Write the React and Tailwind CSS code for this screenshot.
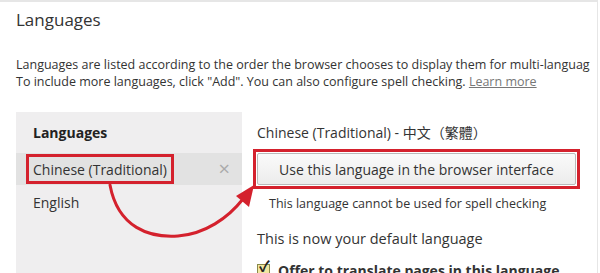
import React from 'react';

const font = { fontFamily: '"Open Sans", "Noto Sans CJK TC", sans-serif' };

function Arrow() {
  return (
    <svg className="absolute left-0 top-0 pointer-events-none" width="600" height="273" viewBox="0 0 600 273">
      <path d="M110 185 C 118 228, 150 238, 178 236 C 205 234, 228 218, 243 199" fill="none" stroke="#d4212d" strokeWidth="3" strokeLinecap="round" />
      <polygon points="254,185 236,196 249,207" fill="#d4212d" />
    </svg>
  );
}

export default function App() {
  return (
    <div className="relative w-[600px] h-[273px] overflow-hidden bg-white" style={font}>
      <div className="w-[598px] h-full border-t-2 border-r border-[#e6e6e6] flex flex-col">
        {/* Title */}
        <h1 className="pl-4 pt-[6px] text-[17px] leading-[24px] text-[#333]">Languages</h1>
        <p className="pl-4 mt-[24px] text-[12.5px] leading-[17px] text-[#333] whitespace-nowrap">
          Languages are listed according to the order the browser chooses to display them for multi-languag
          <br />
          To include more languages, click "Add". You can also configure spell checking.{' '}
          <span className="text-[#777] underline">Learn more</span>
        </p>

        <div className="flex mt-[22px] flex-1">
          {/* Left list */}
          <div className="ml-4 w-[226px] bg-[#efeeef] flex flex-col">
            <div className="pl-[17px] pt-[10px] h-[41px] text-[14px] leading-[22px] font-bold text-[#222]">Languages</div>
            <div className="h-[32px] bg-[#e2e2e2] flex items-center pl-[10px] pr-[12px] justify-between">
              <span className="border-[3px] border-[#d4212d] h-[30px] px-[4px] flex items-center text-[14px] text-[#333]">Chinese (Traditional)</span>
              <span className="text-[20px] leading-none text-[#aaaaaa]">×</span>
            </div>
            <div className="pl-[17px] h-[34px] flex items-center text-[14px] text-[#333]">English</div>
          </div>

          {/* Right detail */}
          <div className="pl-[11px] flex flex-col">
            <div className="pl-[4px] pt-[10px] text-[14px] leading-[22px] text-[#333] whitespace-nowrap">Chinese (Traditional) - 中文（繁體）</div>
            <div className="mt-[5px] w-[327px] h-[40px] border-[3px] border-[#d4212d] p-[1px]">
              <div className="h-full border border-[#b9b9b9] rounded-[2px] bg-gradient-to-b from-[#fafafa] to-[#ececec] flex items-center justify-center text-[14px] text-[#333] whitespace-nowrap">
                Use this language in the browser interface
              </div>
            </div>
            <div className="pl-[16px] mt-[5px] text-[12.5px] leading-[20px] text-[#333] whitespace-nowrap">This language cannot be used for spell checking</div>
            <div className="pl-[4px] mt-[14px] text-[14.5px] leading-[22px] text-[#333] whitespace-nowrap">This is now your default language</div>
            <div className="pl-[4px] mt-[10px] flex items-center gap-[8px] text-[14px] font-bold text-[#333] whitespace-nowrap">
              <span className="w-[13px] h-[13px] border border-[#8a8a4a] bg-[#f2e7a0] relative">
                <span className="absolute -top-[6px] left-[1px] text-[15px] leading-none text-[#222]">✓</span>
              </span>
              Offer to translate pages in this language
            </div>
          </div>
        </div>
      </div>
      <Arrow />
    </div>
  );
}
